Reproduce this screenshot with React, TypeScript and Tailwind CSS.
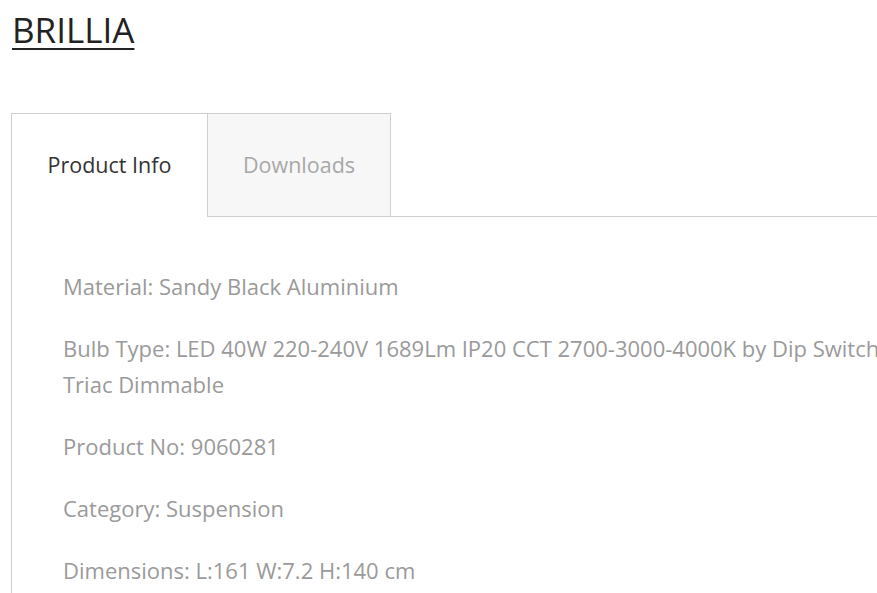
export default function App() {
  const rows: React.ReactNode[] = [
    "Material: Sandy Black Aluminium",
    <>
      Bulb Type: LED 40W 220-240V 1689Lm IP20 CCT 2700-3000-4000K by Dip Switch
      <br />
      Triac Dimmable
    </>,
    "Product No: 9060281",
    "Category: Suspension",
    "Dimensions: L:161 W:7.2 H:140 cm",
  ];
  return (
    <div
      className="w-[877px] h-[593px] overflow-hidden bg-white"
      style={{ fontFamily: "'Open Sans', 'Noto Sans', sans-serif" }}
    >
      <div className="pl-3 pt-[8px]">
        <h1 className="text-[35px] leading-[44px] text-[#222] underline decoration-[2px] underline-offset-[5px] inline-block">
          BRILLIA
        </h1>
      </div>
      <div className="ml-[11px] mt-[61px] w-[1000px]">
        <div className="flex">
          <div className="w-[196px] h-[104px] border-t border-l border-[#cfcfcf] flex items-center justify-center text-[21.5px] text-[#333]">
            Product Info
          </div>
          <div className="w-[184px] h-[104px] border border-[#cfcfcf] bg-[#f7f7f7] flex items-center justify-center text-[21.5px] text-[#a8a8a8]">
            Downloads
          </div>
          <div className="flex-1 h-[104px] border-b border-[#cfcfcf]" />
        </div>
        <div className="border-l border-[#cfcfcf] pl-[51px] pt-[51px] pb-8 flex flex-col gap-[26px] text-[22px] leading-[36px] text-[#9a9a9a]">
          {rows.map((r, i) => (
            <p key={i} className="whitespace-nowrap">
              {r}
            </p>
          ))}
        </div>
      </div>
    </div>
  );
}
